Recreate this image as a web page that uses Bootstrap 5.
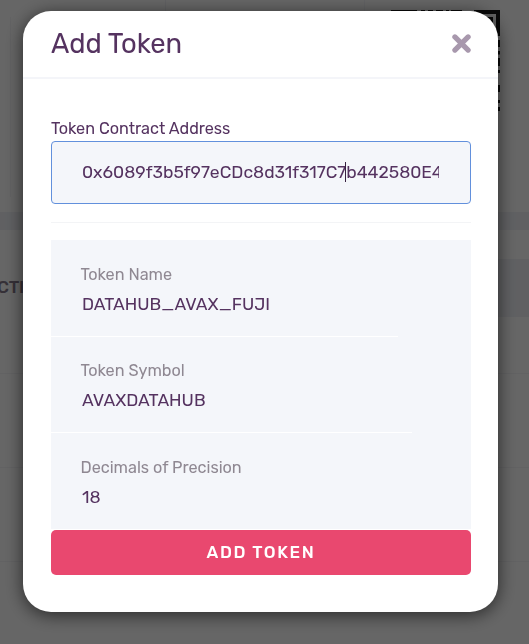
<!DOCTYPE html>
<html lang="en">
<head>
<meta charset="utf-8">
<meta name="viewport" content="width=device-width, initial-scale=1">
<title>Add Token</title>
<link href="https://cdn.jsdelivr.net/npm/bootstrap@5.3.0/dist/css/bootstrap.min.css" rel="stylesheet">
<style>
body{font-family:Rubik,Roboto,"Liberation Sans",sans-serif;font-weight:400;color:#553360;background:#fff;height:644px;overflow:hidden}
.page-top{height:212px;position:relative}
.side-card{width:155px;height:180px;margin:17px 0 0 10px;border-left:1px solid #f4f4f7}
.mid-card{height:197px;width:200px;border-left:1px solid #f1f2f6;border-right:1px solid #f4f5f9}
.qr{left:391px;top:10px}
.band{height:18px;background:#f0f1f6}
.tabs{height:29px}
.tab-band{height:58px}
.tab-label{font-size:17.5px;font-weight:500;width:498px;line-height:56px;text-indent:-3px;letter-spacing:-.3px;color:#85788a}
.tab-active{background:#f0f1f6}
.tx{height:94px;border-bottom:1px solid #f4f4f7}
.tx:first-child{height:57px}
.modal{background:rgba(0,0,0,.6);padding:11px 31px 0 23px!important;overflow:hidden}
.modal-dialog{width:475px;max-width:475px;margin:0}
.modal-content{height:601px;border:0;border-radius:28px;color:inherit;box-shadow:0 3px 18px rgba(0,0,0,.62)}
.modal-header{height:68px;padding:0 27px 0 28px;border-bottom:2px solid #f4f5f9}
.modal-title{font-size:27.4px;line-height:32px;font-weight:400;margin:0}
.close-icon{border:0;background:none;padding:0;line-height:0;margin-top:-2px}
.modal-body{padding:39px 27px 37px 28px}
.field-label{font-size:16.2px;line-height:22px;height:23px}
.address{height:63px;width:420px;padding:0 31px 2px 30px;border:1px solid #6290dc;border-radius:4px;background:#f4f6fa;color:inherit;font-size:17.5px;line-height:59px}
.address:focus{border-color:#6290dc;box-shadow:none;background:#f4f6fa;color:inherit}
.caret{left:294px;top:21px;width:1px;height:20px;background:#37203f}
.rule{height:1px;background:#f3f4f6;margin:18px 0 17px}
.details{background:#f4f6fa;height:289px;margin-bottom:1px}
.detail{height:97px;padding:24px 0 0 29.5px;border-bottom:1px solid #fff}
.detail+.detail{height:96px;padding-top:23px}
.detail:last-child{border:0;padding-top:24px}
.d-name{width:347px}.d-symbol{width:361px}
.detail-label{font-size:16.2px;line-height:21px;color:#8f8892}
.detail-value{font-size:17.5px;line-height:24px;margin:7px 0 0 1.5px}
.btn-add{height:45px;width:420px;border:0;border-radius:5px;background:#e9486f;color:#fff;font-size:17px;font-weight:500;letter-spacing:1.6px;padding:0}
.btn-add:hover{background:#d93c62;color:#fff}
</style>
<script src="https://cdn.jsdelivr.net/npm/bootstrap@5.3.0/dist/js/bootstrap.bundle.min.js"></script>
</head>
<body>
<main aria-hidden="true">
  <section class="page-top d-flex align-items-start">
    <div class="side-card flex-shrink-0"></div>
    <div class="mid-card flex-shrink-0"></div>
    <svg class="qr position-absolute" width="109" height="101" fill="#181818">
      <path d="M0 0h26v3H0zM30 0h4v3h-4zM37 0h5v3h-5zM45 0h7v3h-7zM55 0h3v3h-3zM60 0h11v3H60zM83 0h26v26h-4V4H83zM91 7h11v12H91zM105 30h4v7h-4zM106 41h3v3.5h-3zM105 48h4v8h-4zM106 60h3v3h-3zM105 75h4v7h-4zM106 90h3v3h-3zM105 97h4v4h-4z"/>
    </svg>
  </section>
  <div class="band"></div>
  <div class="tabs"></div>
  <div class="tab-band d-flex"><div class="tab-label">CTI</div><div class="tab-active flex-grow-1"></div></div>
  <section><div class="tx"></div><div class="tx"></div><div class="tx"></div></section>
</main>

<div class="modal d-block" role="dialog" aria-labelledby="dialog-title">
  <div class="modal-dialog">
    <div class="modal-content">
      <header class="modal-header d-flex align-items-center justify-content-between">
        <h1 class="modal-title" id="dialog-title">Add Token</h1>
        <button class="close-icon" type="button" aria-label="Close">
          <svg width="19" height="19" viewBox="0 0 19 19" fill="none" stroke="#a898ad" stroke-width="5.2" stroke-linecap="round"><path d="M2.9 2.9 16.1 16.1M16.1 2.9 2.9 16.1"/></svg>
        </button>
      </header>
      <div class="modal-body">
        <label class="field-label d-block" for="address"><span>Token Contract Address</span></label>
        <div class="position-relative">
          <input class="form-control address" id="address" value="0x6089f3b5f97eCDc8d31f317C7b442580E4">
          <span class="caret position-absolute"></span>
        </div>
        <div class="rule"></div>
        <div class="details">
          <div class="detail d-name"><div class="detail-label"><span>Token Name</span></div><div class="detail-value"><span>DATAHUB_AVAX_FUJI</span></div></div>
          <div class="detail d-symbol"><div class="detail-label"><span>Token Symbol</span></div><div class="detail-value"><span>AVAXDATAHUB</span></div></div>
          <div class="detail"><div class="detail-label"><span>Decimals of Precision</span></div><div class="detail-value"><span>18</span></div></div>
        </div>
        <button class="btn btn-add" type="button">ADD TOKEN</button>
      </div>
    </div>
  </div>
</div>
</body>
</html>
